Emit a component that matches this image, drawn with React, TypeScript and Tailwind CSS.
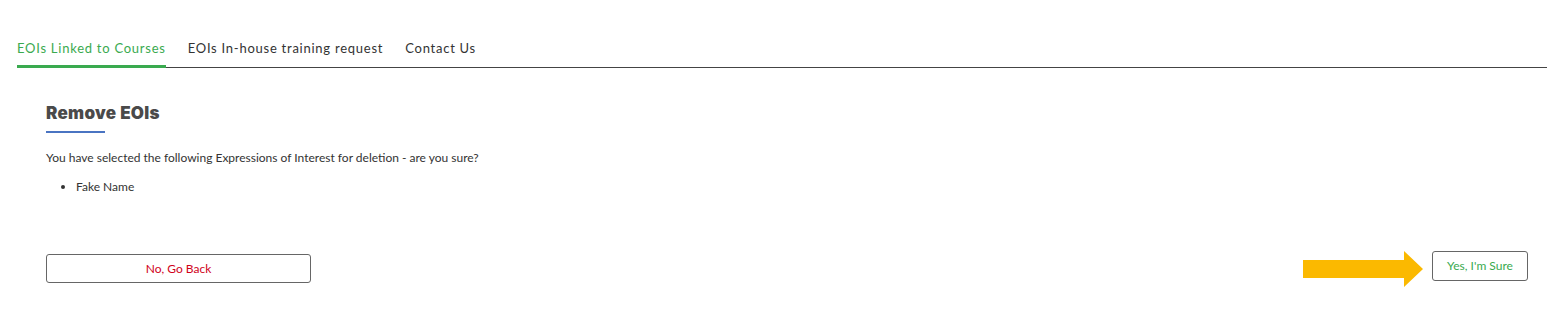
import { useState } from 'react'

const tabs = ['EOIs Linked to Courses', 'EOIs In-house training request', 'Contact Us']

function ArrowRight() {
  return (
    <svg width="120" height="36" viewBox="0 0 120 36" className="block">
      <polygon points="0,9 101,9 101,0 120,18 101,36 101,27 0,27" fill="#fbb900" />
    </svg>
  )
}

export default function App() {
  const [active, setActive] = useState(0)

  return (
    <div className="w-[1547px] h-[328px] bg-white text-[#444] font-['Lato',sans-serif]">
      {/* Tabs */}
      <div className="pt-[38px] pl-[17px]">
        <div className="flex gap-[22px] border-b border-[#444]">
          {tabs.map((tab, i) => (
            <button
              key={tab}
              onClick={() => setActive(i)}
              className={`-mb-px pb-[7px] text-[13px] leading-[20px] tracking-[0.75px] border-b-[3px] ${
                active === i ? 'text-[#3aaa4f] border-[#3aaa4f]' : 'text-[#333] border-transparent'
              }`}
            >
              {tab}
            </button>
          ))}
        </div>
      </div>

      {/* Remove panel */}
      <div className="pl-[46px] pr-[19px] pt-[33px]">
        <h2 className="font-['Inter',sans-serif] font-black text-[17px] leading-[24px] tracking-[0.3px] text-[#4a4a4a]">
          Remove EOIs
        </h2>
        <div className="mt-[6px] w-[59px] h-[2px] bg-[#4a74c2]" />
        <p className="mt-[17px] text-[12px] leading-[16px] text-[#333]">
          You have selected the following Expressions of Interest for deletion - are you sure?
        </p>
        <ul className="mt-[13px] pl-[30px] list-disc text-[12px] leading-[16px] text-[#333]">
          <li>Fake Name</li>
        </ul>

        <div className="mt-[56px] flex items-start justify-between">
          <button className="mt-[3px] w-[265px] h-[29px] rounded-[3px] border border-[#666] text-[12px] text-[#d0021b]">
            No, Go Back
          </button>
          <div className="flex items-start gap-[9px]">
            <ArrowRight />
            <button className="w-[96px] h-[30px] rounded-[3px] border border-[#666] text-[12px] text-[#3aaa4f]">
              Yes, I'm Sure
            </button>
          </div>
        </div>
      </div>
    </div>
  )
}
